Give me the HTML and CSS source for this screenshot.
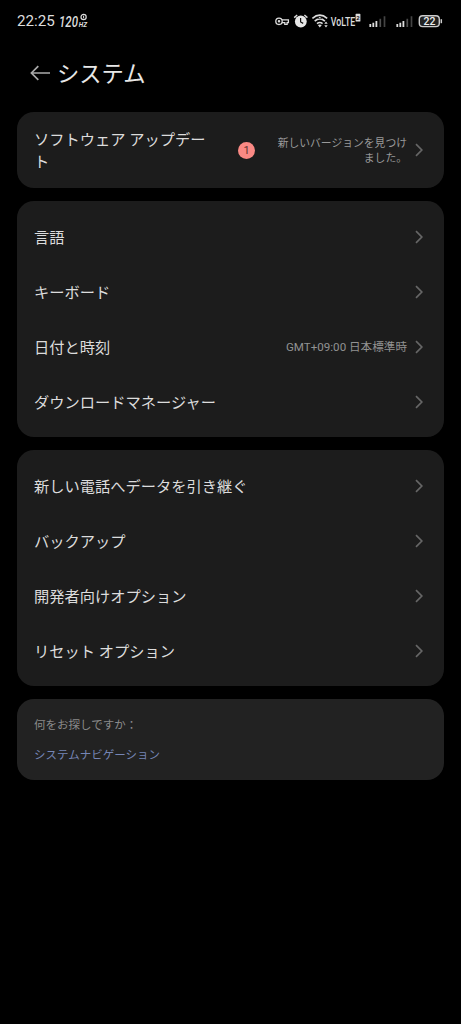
FILE: index.html
```html
<!DOCTYPE html>
<html lang="ja">
<head>
<meta charset="utf-8">
<title>システム</title>
<link rel="stylesheet" href="styles.css">
</head>
<body>
<svg class="defs" width="0" height="0"><symbol id="chev" viewBox="0 0 8 14"><path d="M1 1.2 6.8 7 1 12.8" fill="none" stroke="currentColor" stroke-width="1.7"/></symbol></svg>
<header class="status">
  <div class="clock">22:25</div>
  <svg class="rate" width="30" height="18" viewBox="0 0 30 18">
    <text class="rate-num" x="1" y="15" textLength="19" lengthAdjust="spacingAndGlyphs">120</text>
    <circle cx="25.6" cy="5" r="2.6" fill="none" stroke="#ddd" stroke-width="1.2"/>
    <path d="M25.6 3.7v2.6" stroke="#ddd"/>
    <text class="rate-hz" x="20.8" y="15" textLength="8.2" lengthAdjust="spacingAndGlyphs">HZ</text>
  </svg>
  <svg class="icons" width="170" height="20" viewBox="274 11 170 20">
    <g fill="none" stroke="#ddd" stroke-width="1.3">
      <circle cx="279" cy="21.3" r="3.2"/><circle cx="279" cy="21.3" r=".6"/>
      <path d="M282 19.9h6.4v2.8h-1.3v1.7h-2.3v-1.7H282"/>
    </g>
    <circle cx="300.8" cy="21.5" r="5.9" fill="#e6e6e6"/>
    <path d="M294.2 17.6l3-2.6M307.4 17.6l-3-2.6" stroke="#ddd" stroke-width="1.4"/>
    <path d="M300.6 18v4l2.6 1.4" fill="none" stroke="#111" stroke-width="1.2"/>
    <g fill="none" stroke="#ddd" stroke-width="1.6">
      <path d="M312.4 18.3q7.4-6.2 14.8 0M314.7 21.1q5.1-4.4 10.2 0M317 23.7q2.8-2.4 5.6 0"/>
    </g>
    <path d="M317.8 25.1q2-1.4 4 0l-2 2.4z" fill="#ddd"/>
    <path d="M317.9 18.6h3.8l-1.9-2.6z" fill="#ddd" stroke="#000" stroke-width=".6"/>
    <path d="M326 21.6l1.7 2.2h-3.4zM326 27.4l1.7-2.2h-3.4z" fill="#ddd"/>
    <text class="volte" x="330.8" y="25.6" textLength="24.4" lengthAdjust="spacingAndGlyphs">VoLTE</text>
    <rect x="355.6" y="13.8" width="4.8" height="7.8" rx=".6" fill="#ddd"/>
    <text class="volte-num" x="356.3" y="20">2</text>
    <g id="signal">
      <path d="M370.3 24v3M373.3 22.7V27M376.4 21v6" stroke="#ddd" stroke-width="1.8"/>
      <path d="M380.3 18.8V27M384.5 16.2V27" stroke="#444" stroke-width="1.7"/>
      <path d="M380.3 19.5V27" stroke="#555" stroke-width="1"/>
    </g>
    <use href="#signal" x="27"/>
    <rect x="419.3" y="15.8" width="20" height="10.8" rx="3.4" fill="#222" stroke="#ccc" stroke-width="1.4"/>
    <path d="M441.3 19.2v4" stroke="#ccc" stroke-width="1.5"/>
    <text class="battery" x="423.6" y="25" textLength="11.8">22</text>
  </svg>
</header>
<div class="title">
  <svg width="21" height="16" viewBox="0 0 21 16"><path d="M20 8H1.5M8.3 1.1 1.4 8l6.9 6.9" fill="none" stroke="#aaa" stroke-width="1.7"/></svg>
  <h1>システム</h1>
</div>
<main>
  <section class="card update">
    <div class="update-label">ソフトウェア アップデート</div>
    <span class="badge">1</span>
    <div class="update-note">新しいバージョンを見つけ<br>ました。</div>
    <svg class="chev"><use href="#chev"/></svg>
  </section>
  <section class="card list">
    <div class="row"><span>言語</span><svg class="chev"><use href="#chev"/></svg></div>
    <div class="row"><span>キーボード</span><svg class="chev"><use href="#chev"/></svg></div>
    <div class="row"><span>日付と時刻</span><span class="value">GMT+09:00 日本標準時</span><svg class="chev"><use href="#chev"/></svg></div>
    <div class="row"><span>ダウンロードマネージャー</span><svg class="chev"><use href="#chev"/></svg></div>
  </section>
  <section class="card list">
    <div class="row"><span>新しい電話へデータを引き継ぐ</span><svg class="chev"><use href="#chev"/></svg></div>
    <div class="row"><span>バックアップ</span><svg class="chev"><use href="#chev"/></svg></div>
    <div class="row"><span>開発者向けオプション</span><svg class="chev"><use href="#chev"/></svg></div>
    <div class="row"><span>リセット オプション</span><svg class="chev"><use href="#chev"/></svg></div>
  </section>
  <section class="card search">
    <div class="question">何をお探しですか：</div>
    <a class="link">システムナビゲーション</a>
  </section>
</main>
</body>
</html>
```
FILE: styles.css
```css
* { box-sizing: border-box; }
body {
  margin: 0;
  height: 1024px;
  background: #000;
  color: #dcdcdc;
  font-family: Roboto, "Noto Sans CJK JP", sans-serif;
}
.defs { position: absolute; }
.status { display: flex; height: 42px; padding: 11px 17px 0; align-items: flex-start; }
.clock { width: 41px; font-size: 15.2px; line-height: 21px; color: #ddd; }
.icons { margin-left: auto; }
.rate { margin-top: 1px; }
.rate-num { font: italic 500 14.5px Roboto, sans-serif; fill: #ddd; }
.rate-hz { font: italic 700 7px Roboto, sans-serif; fill: #ddd; }
.volte { font: 500 12px Roboto, sans-serif; fill: #ddd; }
.volte-num { font: 700 6px Roboto, sans-serif; fill: #111; }
.battery { font: 500 10.5px Roboto, sans-serif; fill: #eee; }
.title { display: flex; align-items: center; height: 62px; padding-left: 30px; gap: 6px; }
h1 { margin: 0; padding-top: 2px; font-size: 22.3px; line-height: 32px; font-weight: 400; color: #e8e8e8; }
main { display: flex; flex-direction: column; gap: 13px; padding: 8px 17px 0; }
.card { background: #1c1c1c; border-radius: 17px; padding: 0 21px 0 17px; }
.update { display: flex; align-items: center; height: 76px; }
.update-label { width: 180px; padding-top: 2px; font-size: 15.25px; line-height: 22px; }
.badge {
  width: 17px; height: 17px; margin-left: 24px;
  border-radius: 50%; background: #fa8984; color: #5d302f;
  font-size: 11px; line-height: 17px; text-align: center;
}
.update-note { margin-left: auto; padding-top: 2px; font-size: 10.8px; line-height: 15px; text-align: right; color: #999; white-space: nowrap; }
.chev { width: 8px; height: 14px; margin-left: 8px; flex: none; color: #666; }
.list { height: 236px; padding-top: 8px; }
.row { display: flex; align-items: center; height: 55px; font-size: 15.25px; }
.row > span { padding-bottom: 2px; }
.row > :nth-child(2) { margin-left: auto; }
.value { font-size: 11.6px; color: #929292; }
.search { height: 81px; padding-top: 16px; background: #222; font-size: 11.5px; line-height: 20px; }
.question { color: #8a8a8a; }
.link { display: block; margin-top: 10px; color: #7585b5; }
```
